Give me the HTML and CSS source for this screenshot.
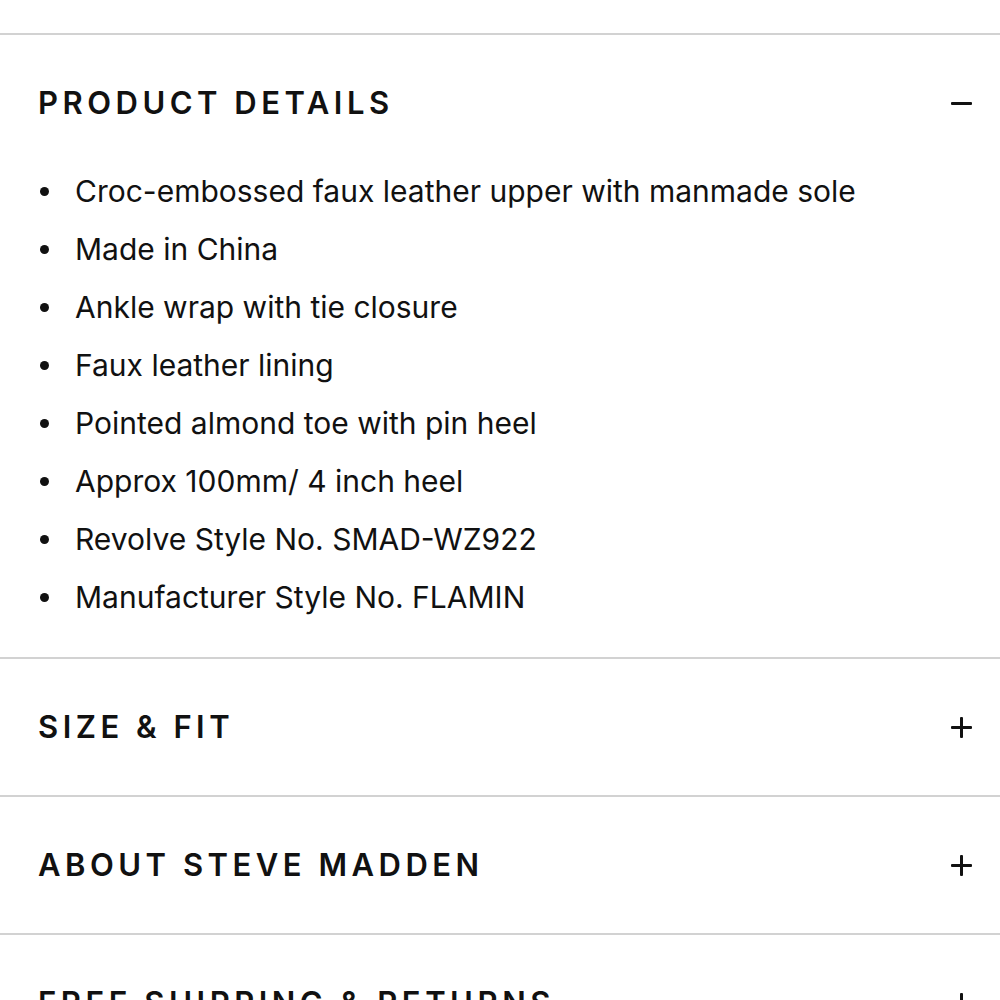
FILE: index.html
```html
<!DOCTYPE html>
<html lang="en">
<head>
<meta charset="utf-8">
<title>Product details</title>
<link rel="stylesheet" href="styles.css">
</head>
<body>
<div class="accordion">
  <section class="panel open">
    <div class="panel-head">
      <h2 class="panel-title">PRODUCT DETAILS</h2>
      <span class="toggle minus"></span>
    </div>
    <ul class="details">
      <li>Croc-embossed faux leather upper with manmade sole</li>
      <li>Made in China</li>
      <li>Ankle wrap with tie closure</li>
      <li>Faux leather lining</li>
      <li>Pointed almond toe with pin heel</li>
      <li>Approx 100mm/ 4 inch heel</li>
      <li>Revolve Style No. SMAD-WZ922</li>
      <li>Manufacturer Style No. FLAMIN</li>
    </ul>
  </section>
  <section class="panel">
    <div class="panel-head">
      <h2 class="panel-title">SIZE &amp; FIT</h2>
      <span class="toggle plus"></span>
    </div>
  </section>
  <section class="panel">
    <div class="panel-head">
      <h2 class="panel-title">ABOUT STEVE MADDEN</h2>
      <span class="toggle plus"></span>
    </div>
  </section>
  <section class="panel">
    <div class="panel-head">
      <h2 class="panel-title">FREE SHIPPING &amp; RETURNS</h2>
      <span class="toggle plus"></span>
    </div>
  </section>
</div>
</body>
</html>
```
FILE: styles.css
```css
html, body {
  margin: 0;
  padding: 0;
  background: #ffffff;
}
body {
  font-family: Inter, "Noto Sans", sans-serif;
  color: #111111;
  overflow: hidden;
  height: 1000px;
}
.accordion {
  padding-top: 33px;
}
.panel {
  border-top: 2px solid #d2d2d2;
}
.panel-head {
  display: flex;
  align-items: center;
  justify-content: space-between;
  padding: 50px 28px 50px 38px;
  height: 36px;
}
.open .panel-head {
  padding-bottom: 0;
}
.panel-title {
  margin: 0;
  font-size: 31px;
  font-weight: 600;
  letter-spacing: 4.5px;
  line-height: 36px;
}
.toggle {
  position: relative;
  width: 21px;
  height: 21px;
  flex: none;
}
.toggle::before,
.toggle::after {
  content: "";
  position: absolute;
  background: #111111;
  border-radius: 1px;
}
.toggle::before {
  left: 0;
  right: 0;
  top: 9px;
  height: 3px;
}
.plus::after {
  top: 0;
  bottom: 0;
  left: 9px;
  width: 3px;
}
.details {
  list-style: none;
  margin: 41px 0 0 0;
  padding: 0 0 31px 0;
}
.details li {
  display: flex;
  align-items: center;
  height: 58px;
  font-size: 30px;
  line-height: 58px;
  padding-left: 75px;
  position: relative;
}
.details li::before {
  content: "";
  position: absolute;
  left: 40px;
  top: 25px;
  width: 9px;
  height: 9px;
  border-radius: 50%;
  background: #111111;
}
```
